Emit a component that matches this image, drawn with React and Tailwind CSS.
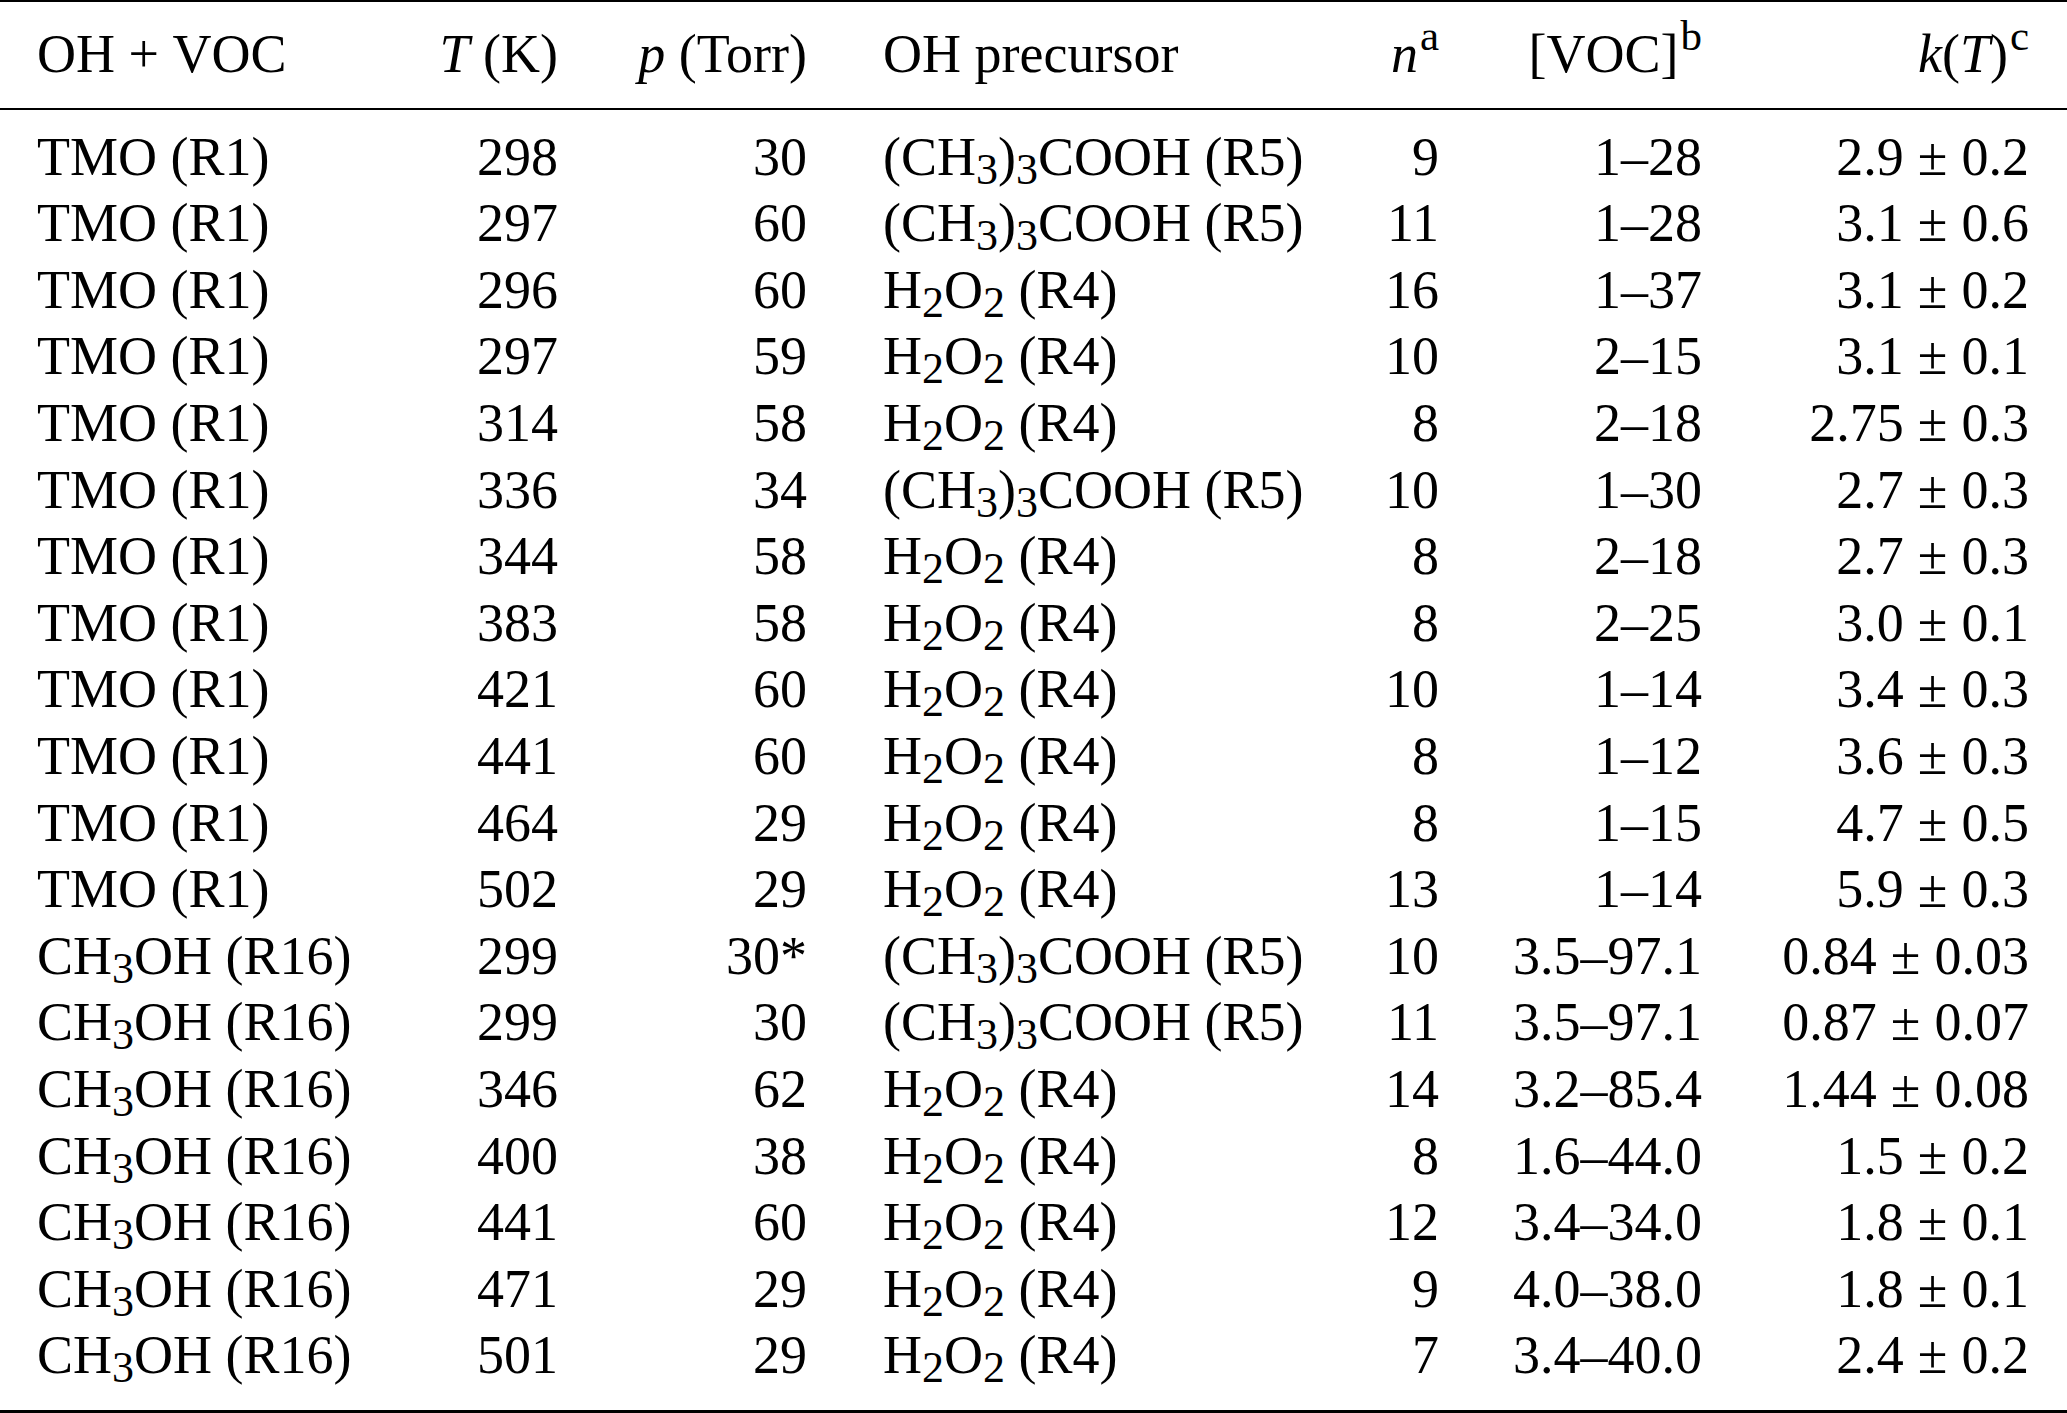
import React from "react";

const Sub = ({ children }) => (
  <span className="relative top-[9px] text-[44px] leading-none">{children}</span>
);

const Sup = ({ children }) => (
  <span className="relative -top-[22px] text-[43px] leading-none ml-[2px]">{children}</span>
);

const Pm = ({ v, e }) => (
  <>
    {v}
    <span className="mx-[0.26em]">±</span>
    {e}
  </>
);

const TMO = "TMO (R1)";
const MEOH = (
  <>
    CH<Sub>3</Sub>OH (R16)
  </>
);
const TBHP = (
  <>
    (CH<Sub>3</Sub>)<Sub>3</Sub>COOH (R5)
  </>
);
const H2O2 = (
  <>
    H<Sub>2</Sub>O<Sub>2</Sub> (R4)
  </>
);

const rows = [
  [TMO, "298", "30", TBHP, "9", "1–28", "2.9", "0.2"],
  [TMO, "297", "60", TBHP, "11", "1–28", "3.1", "0.6"],
  [TMO, "296", "60", H2O2, "16", "1–37", "3.1", "0.2"],
  [TMO, "297", "59", H2O2, "10", "2–15", "3.1", "0.1"],
  [TMO, "314", "58", H2O2, "8", "2–18", "2.75", "0.3"],
  [TMO, "336", "34", TBHP, "10", "1–30", "2.7", "0.3"],
  [TMO, "344", "58", H2O2, "8", "2–18", "2.7", "0.3"],
  [TMO, "383", "58", H2O2, "8", "2–25", "3.0", "0.1"],
  [TMO, "421", "60", H2O2, "10", "1–14", "3.4", "0.3"],
  [TMO, "441", "60", H2O2, "8", "1–12", "3.6", "0.3"],
  [TMO, "464", "29", H2O2, "8", "1–15", "4.7", "0.5"],
  [TMO, "502", "29", H2O2, "13", "1–14", "5.9", "0.3"],
  [MEOH, "299", "30*", TBHP, "10", "3.5–97.1", "0.84", "0.03"],
  [MEOH, "299", "30", TBHP, "11", "3.5–97.1", "0.87", "0.07"],
  [MEOH, "346", "62", H2O2, "14", "3.2–85.4", "1.44", "0.08"],
  [MEOH, "400", "38", H2O2, "8", "1.6–44.0", "1.5", "0.2"],
  [MEOH, "441", "60", H2O2, "12", "3.4–34.0", "1.8", "0.1"],
  [MEOH, "471", "29", H2O2, "9", "4.0–38.0", "1.8", "0.1"],
  [MEOH, "501", "29", H2O2, "7", "3.4–40.0", "2.4", "0.2"],
];

const grid =
  "grid grid-cols-[420px_138px_249px_533px_99px_263px_327px] h-[66.6px] leading-[66.6px] whitespace-nowrap";

const App = () => {
  return (
    <div className="min-h-screen bg-white text-black font-['Liberation_Serif',serif] text-[54px]">
      {/* top rule + header */}
      <div className="border-t-2 border-black pt-[18.5px] pb-[21px]">
        <div className={grid}>
          <div className="pl-[37px]">
            OH
            <span className="mx-[0.25em]">+</span>
            VOC
          </div>
          <div className="text-right">
            <i>T</i> (K)
          </div>
          <div className="text-right">
            <i>p</i> (Torr)
          </div>
          <div className="pl-[76px]">OH precursor</div>
          <div className="text-right">
            <i>n</i>
            <Sup>a</Sup>
          </div>
          <div className="text-right">
            [VOC]
            <Sup>b</Sup>
          </div>
          <div className="text-right">
            <i>k</i>(<i>T</i>)<Sup>c</Sup>
          </div>
        </div>
      </div>

      {/* body */}
      <div className="border-t-2 border-black pt-[13.5px] pb-[21px] border-b-[3px]">
        {rows.map((r, i) => (
          <div key={i} className={grid}>
            <div className="pl-[37px]">{r[0]}</div>
            <div className="text-right">{r[1]}</div>
            <div className="text-right">{r[2]}</div>
            <div className="pl-[76px]">{r[3]}</div>
            <div className="text-right">{r[4]}</div>
            <div className="text-right">{r[5]}</div>
            <div className="text-right">
              <Pm v={r[6]} e={r[7]} />
            </div>
          </div>
        ))}
      </div>
    </div>
  );
};

export default App;
